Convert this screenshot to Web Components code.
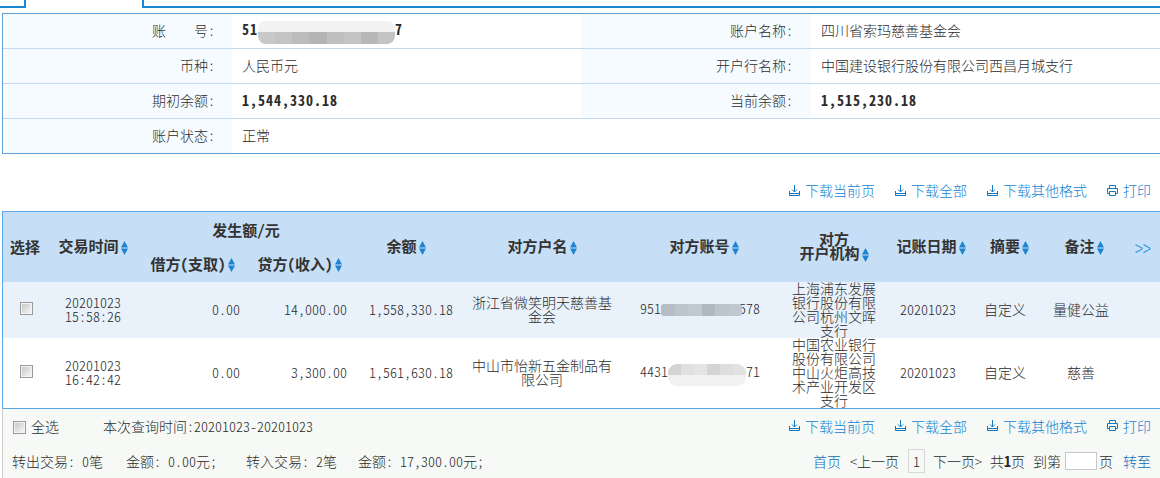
<!DOCTYPE html>
<html lang="zh-CN">
<head>
<meta charset="utf-8">
<title>账户明细</title>
<style>
  html, body {
    margin: 0;
    height: 478px;
    overflow: hidden;
    background: #fff;
    color: #2b2b2b;
    font: 300 14px/14px "Noto Sans CJK SC", "Liberation Sans", sans-serif;
    font-feature-settings: "hwid";
  }
</style>
</head>
<body>
<tab-strip></tab-strip>
<account-info></account-info>
<action-bar style="height:57px;padding-top:15px"></action-bar>
<tx-grid></tx-grid>

<script>
const downloadIcon = `
  <svg width="11" height="11" viewBox="0 0 11 11" fill="none" stroke="#1377bd" stroke-width="1">
    <path d="M.5 6v4.5h10V6M.5 8.5h10M5.5 0v6.5M3 4.5l2.5 2.5L8 4.5"/>
  </svg>`;

const printIcon = `
  <svg width="11" height="11" viewBox="0 0 11 11" fill="none" stroke="#1377bd" stroke-width="1">
    <path d="M2.5 3V.5h6V3M2.5 8.5h-2v-5h10v5h-2M2.5 6.5h6v4h-6z"/>
  </svg>`;

class TabStrip extends HTMLElement {
  constructor() {
    super();
    this.attachShadow({ mode: "open" });
    this.shadowRoot.innerHTML = `
      <style>
        :host { display: flex; height: 8px; margin-bottom: 5px; }
        div { box-sizing: border-box; height: 8px; border: 0 solid #1b87d0; }
        .left { width: 26px; border-width: 0 2px 2px 0; }
        .active { width: 116px; }
        .right { flex: 1; border-width: 0 0 2px 2px; }
      </style>
      <div class="left"></div><div class="active"></div><div class="right"></div>`;
  }
}

class MaskStrip extends HTMLElement {
  constructor() {
    super();
    this.attachShadow({ mode: "open" });
    const cells = (this.getAttribute("cells") || "").split(",");
    const cap = this.getAttribute("cap");
    const foot = this.getAttribute("foot");
    this.shadowRoot.innerHTML = `
      <style>
        :host { display: inline-block; position: relative; height: 14px; vertical-align: middle; }
        .blob { position: absolute; left: 0; right: 0; top: var(--top, 0); overflow: hidden; border-radius: var(--round, 3px); }
        .cap { height: var(--cap, 0); background: ${cap || "transparent"}; }
        .foot { height: var(--foot, 0); background: ${foot || "transparent"}; }
        .cells { display: flex; height: var(--band, 12px); }
        .cells i { flex: 1; }
      </style>
      <div class="blob">
        <div class="cap"></div>
        <div class="cells">${cells.map((c) => `<i style="background:${c}"></i>`).join("")}</div>
        <div class="foot"></div>
      </div>`;
  }
}

class AccountInfo extends HTMLElement {
  constructor() {
    super();
    this.attachShadow({ mode: "open" });
    this.shadowRoot.innerHTML = `
      <style>
        :host {
          display: block;
          box-sizing: border-box;
          width: 1170px;
          margin-left: 2px;
          border: 1px solid #5f9fd6;
        }
        table { border-collapse: collapse; table-layout: fixed; width: 1167px; }
        td, th {
          height: 32px;
          padding: 0 0 2px;
          border-bottom: 1px solid #c5d9ee;
          color: inherit;
          font-weight: inherit;
        }
        tr:last-child td, tr:last-child th { border-bottom: 0; }
        th { text-align: right; padding-right: 17px; background: #f5fbff; }
        th.second { padding-right: 18px; }
        td { padding-left: 10px; }
        b { letter-spacing: 1px; font-weight: 700; }
        .gap { margin-right: 28px; }
      </style>
      <table>
        <colgroup><col style="width:229px"><col style="width:349px"><col style="width:230px"><col style="width:359px"></colgroup>
        <tr>
          <th><span class="gap">账</span>号:</th>
          <td><b>51</b><mask-strip cells="#c8c8c8,#c4c4c4,#bcbcbc,#b4b4b4,#c0c0c0,#c4c4c4,#b8b8b8,#c4c4c4" cap="#f2f2f2" style="width:137px;--cap:11px;--band:12px;--top:-3px;--round:8px"></mask-strip><b>7</b></td>
          <th class="second">账户名称:</th><td>四川省索玛慈善基金会</td>
        </tr>
        <tr><th>币种:</th><td>人民币元</td><th class="second">开户行名称:</th><td>中国建设银行股份有限公司西昌月城支行</td></tr>
        <tr><th>期初余额:</th><td><b>1,544,330.18</b></td><th class="second">当前余额:</th><td><b>1,515,230.18</b></td></tr>
        <tr><th>账户状态:</th><td>正常</td><th style="background:#fff"></th><td></td></tr>
      </table>`;
  }
}

class ActionBar extends HTMLElement {
  constructor() {
    super();
    this.attachShadow({ mode: "open" });
    const link = (icon, text) => `<a>${icon}<span>${text}</span></a>`;
    this.shadowRoot.innerHTML = `
      <style>
        :host {
          display: flex;
          box-sizing: border-box;
          justify-content: flex-end;
          align-items: center;
          gap: 20px;
          padding-right: 9px;
        }
        a { display: flex; align-items: center; gap: 5px; color: #1482d2; white-space: nowrap; }
      </style>
      ${link(downloadIcon, "下载当前页")}
      ${link(downloadIcon, "下载全部")}
      ${link(downloadIcon, "下载其他格式")}
      ${link(printIcon, "打印")}`;
  }
}

class SortMark extends HTMLElement {
  constructor() {
    super();
    this.attachShadow({ mode: "open" });
    this.shadowRoot.innerHTML = `
      <style>
        :host { display: inline-block; width: 7px; height: 14px; margin-left: 2px; vertical-align: middle; }
        svg { display: block; }
      </style>
      <svg width="7" height="14" viewBox="0 0 7 14" fill="#1c84d0"><path d="M3.5 0 7 6.5H0zM0 7.5h7L3.5 14z"/></svg>`;
  }
}

class TxCheck extends HTMLElement {
  constructor() {
    super();
    this.attachShadow({ mode: "open" });
    this.shadowRoot.innerHTML = `
      <style>
        :host { display: inline-block; width: 13px; height: 13px; vertical-align: middle; }
        input {
          appearance: none;
          display: block;
          box-sizing: border-box;
          width: 13px;
          height: 13px;
          margin: 0;
          border: 1px solid #9a9a9a;
          box-shadow: inset 0 0 0 1px #f4f4f4;
          background: linear-gradient(135deg, #c4c4c4, #fbfbfb);
        }
      </style>
      <input type="checkbox">`;
  }
}

class TxGrid extends HTMLElement {
  constructor() {
    super();
    this.attachShadow({ mode: "open" });
    const widths = [44, 92, 107, 107, 106, 166, 158, 102, 86, 68, 84, 40];
    this.shadowRoot.innerHTML = `
      <style>
        :host {
          display: block;
          box-sizing: border-box;
          width: 1158px;
          margin-left: 2px;
          border-left: 1px solid #5aa5e6;
          border-top: 1px solid #5aa5e6;
        }
        table { border-collapse: collapse; table-layout: fixed; width: 1160px; }
        th {
          height: 35px;
          padding: 0;
          background: #c7dff6;
          color: #333;
          font-size: 15px;
          font-weight: 700;
          line-height: 14px;
          white-space: nowrap;
        }
        th.date { padding-left: 6px; }
        th.memo { padding-left: 9px; }
        th.note { padding-left: 6px; }
        td { padding: 0 0 2px; text-align: center; box-sizing: border-box; }
        .odd td { background: #e9f2fb; height: 56px; }
        .even td { height: 70px; }
        td tx-check { margin: 0 0 3px 2px; }
        td.num { text-align: right; padding-right: 6px; }
        td.name { padding: 0 9px 2px; }
        td.acct { padding-right: 8px; white-space: nowrap; }
        td.bank { padding: 0 9px; vertical-align: top; }
        td.bank div { margin-top: -1px; }
        .more { color: #2a8ee0; font-weight: 300; font-size: 16px; }
        .more span { display: inline-block; transform: scaleY(1.4); }
        .foot { background: #f6f9f5; border-top: 1px solid #5aa5e6; margin-left: -1px; border-left: 1px solid #ccc; }
        .line { display: flex; align-items: center; justify-content: space-between; height: 35px; padding-right: 9px; }
        .line > * { padding-bottom: 2px; }
        .left { display: flex; align-items: center; padding-left: 10px; }
        .left tx-check { margin-top: 3px; }
        .left.sum { padding-left: 9px; }
        .left.sum i { display: inline-block; width: 7px; }
        .left.sum span { margin-right: 23px; }
        .left.sum span.out { margin-right: 29px; }
        .left.sum span.in { margin-right: 21px; }
        .left label { margin-left: 5px; }
        .left .query { margin-left: 44px; }
        .line action-bar { height: 35px; padding-right: 0; }
        .pager { display: flex; align-items: center; }
        .pager a { color: #0f6cb5; }
        .pager b { font-weight: 700; }
        .pager .box {
          box-sizing: border-box;
          width: 17px;
          height: 24px;
          line-height: 22px;
          text-align: center;
          border: 1px solid #d8d8d8;
          margin: 0 8px 0 9px;
        }
        .pager input {
          box-sizing: border-box;
          width: 32px;
          height: 18px;
          margin: 0 2px 0 4px;
          border: 1px solid #c8c8c8;
          background: #fff;
          padding: 0;
        }
      </style>
      <table>
        <colgroup>${widths.map((w) => `<col style="width:${w}px">`).join("")}</colgroup>
        <tr>
          <th rowspan="2">选择</th>
          <th rowspan="2">交易时间<sort-mark></sort-mark></th>
          <th colspan="2">发生额/元</th>
          <th rowspan="2">余额<sort-mark></sort-mark></th>
          <th rowspan="2">对方户名<sort-mark></sort-mark></th>
          <th rowspan="2">对方账号<sort-mark></sort-mark></th>
          <th rowspan="2">对方<br>开户机构<sort-mark></sort-mark></th>
          <th rowspan="2" class="date">记账日期<sort-mark></sort-mark></th>
          <th rowspan="2" class="memo">摘要<sort-mark></sort-mark></th>
          <th rowspan="2" class="note">备注<sort-mark></sort-mark></th>
          <th rowspan="2" class="more"><span>&gt;&gt;</span></th>
        </tr>
        <tr>
          <th>借方(支取)<sort-mark></sort-mark></th>
          <th>贷方(收入)<sort-mark></sort-mark></th>
        </tr>
        <tr class="odd">
          <td><tx-check></tx-check></td>
          <td>20201023<br>15:58:26</td>
          <td class="num">0.00</td>
          <td class="num">14,000.00</td>
          <td class="num">1,558,330.18</td>
          <td class="name">浙江省微笑明天慈善基金会</td>
          <td class="acct">951<mask-strip cells="#b6bdc4,#bcc4cc,#c0c8d0,#b0b8c0,#bcc4cc,#c0c8d0" style="width:81px;margin-right:-3px;--top:1px"></mask-strip>578</td>
          <td class="bank"><div>上海浦东发展银行股份有限公司杭州文晖支行</div></td>
          <td>20201023</td>
          <td>自定义</td>
          <td>量健公益</td>
          <td></td>
        </tr>
        <tr class="even">
          <td><tx-check></tx-check></td>
          <td>20201023<br>16:42:42</td>
          <td class="num">0.00</td>
          <td class="num">3,300.00</td>
          <td class="num">1,561,630.18</td>
          <td class="name">中山市怡新五金制品有限公司</td>
          <td class="acct">4431<mask-strip cells="#d4d4d4,#e0e0e0,#e4e4e4,#d4d4d4,#dedede,#e2e2e2" foot="#f1f1f1" style="width:78px;margin-right:-7px;--band:11px;--foot:11px;--top:-2px;--round:9px"></mask-strip>171</td>
          <td class="bank"><div>中国农业银行股份有限公司中山火炬高技术产业开发区支行</div></td>
          <td>20201023</td>
          <td>自定义</td>
          <td>慈善</td>
          <td></td>
        </tr>
      </table>
      <div class="foot">
        <div class="line">
          <div class="left">
            <tx-check></tx-check><label>全选</label>
            <span class="query">本次查询时间:20201023-20201023</span>
          </div>
          <action-bar></action-bar>
        </div>
        <div class="line">
          <div class="left sum">
            <span>转出交易:<i></i>0笔</span><span class="out">金额:<i></i>0.00元;</span><span class="in">转入交易:<i></i>2笔</span><span>金额:<i></i>17,300.00元;</span>
          </div>
          <div class="pager">
            <a>首页</a>
            <span style="margin-left:9px">&lt;上一页</span>
            <span class="box">1</span>
            <span>下一页&gt;</span>
            <span style="margin-left:8px">共<b>1</b>页</span>
            <span style="margin-left:8px">到第</span>
            <input type="text" aria-label="页码">
            <span>页</span>
            <a style="margin-left:10px">转至</a>
          </div>
        </div>
      </div>`;
  }
}

customElements.define("tab-strip", TabStrip);
customElements.define("mask-strip", MaskStrip);
customElements.define("account-info", AccountInfo);
customElements.define("action-bar", ActionBar);
customElements.define("sort-mark", SortMark);
customElements.define("tx-check", TxCheck);
customElements.define("tx-grid", TxGrid);
</script>
</body>
</html>
